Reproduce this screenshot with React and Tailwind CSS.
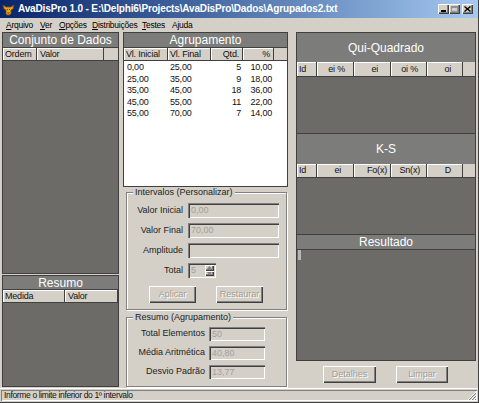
import React from "react";

const raised =
  "shadow-[inset_1px_1px_0_#ffffff,inset_-1px_-1px_0_#404040,inset_-2px_-2px_0_#808080]";
const sunken =
  "shadow-[inset_1px_1px_0_#808080,inset_2px_2px_0_#404040,inset_-1px_-1px_0_#ffffff,inset_-2px_-2px_0_#d4d0c8]";

function HCell({ className = "", children }) {
  return (
    <div
      className={`h-full shrink-0 flex items-center bg-[#d4d0c8] border-r border-b border-[#404040] shadow-[inset_1px_1px_0_#ffffff] text-[9px] leading-none tracking-[-0.2px] text-[#111] ${className}`}
    >
      {children}
    </div>
  );
}

function Filler() {
  return <div className="h-full flex-1 bg-[#d4d0c8] border-b border-[#404040]" />;
}

function PanelHeader({ className = "", children }) {
  return (
    <div
      className={`shrink-0 flex items-center justify-center bg-[#7c7c7a] text-white text-[12px] leading-none border-b border-[#404040] ${className}`}
    >
      {children}
    </div>
  );
}

function DisabledInput({ className = "", value }) {
  return (
    <div
      className={`bg-[#d4d0c8] ${sunken} flex items-center pl-[3px] text-[9px] leading-none text-[#a3a09a] ${className}`}
    >
      {value}
    </div>
  );
}

function DisabledButton({ className = "", children }) {
  return (
    <div
      className={`bg-[#d4d0c8] ${raised} flex items-center justify-center text-[9px] leading-none text-[#a09c94] [text-shadow:1px_1px_0_#ffffff] ${className}`}
    >
      {children}
    </div>
  );
}

function TitleButton({ children, disabled }) {
  return (
    <div
      className={`w-[11px] h-[10px] bg-[#d4d0c8] ${raised} flex items-center justify-center ${
        disabled ? "text-[#909090]" : "text-black"
      }`}
    >
      {children}
    </div>
  );
}

const rows = [
  ["0,00", "25,00", "5", "10,00"],
  ["25,00", "35,00", "9", "18,00"],
  ["35,00", "45,00", "18", "36,00"],
  ["45,00", "55,00", "11", "22,00"],
  ["55,00", "70,00", "7", "14,00"],
];

export default function App() {
  return (
    <div className="w-[479px] h-[403px] bg-[#d4d0c8] flex flex-col overflow-hidden font-['Liberation_Sans',Arial,sans-serif] text-black border-r border-b border-[#404040]">
      {/* Title bar */}
      <div className="h-[18px] shrink-0 flex items-center bg-linear-to-r from-[#0a246a] to-[#a6caf0] pl-[2px] pr-[3px]">
        <svg width="13" height="13" viewBox="0 0 13 13" className="shrink-0">
          <path d="M1 2 L4 4 L9 4 L12 2 L11 6 L9 7 L9 11 L7 12 L5 12 L4 11 L4 7 L2 6 Z" fill="#e8a21c" stroke="#7a4a06" strokeWidth="0.8" />
          <path d="M5 6 L6 7 M8 6 L7 7" stroke="#5a3200" strokeWidth="0.9" />
          <path d="M5.5 10 L7.5 10" stroke="#5a3200" strokeWidth="0.9" />
        </svg>
        <span className="ml-[3px] text-white font-bold text-[10px] leading-none tracking-[-0.15px] whitespace-nowrap">
          {"AvaDisPro 1.0 - E:\\Delphi6\\Projects\\AvaDisPro\\Dados\\Agrupados2.txt"}
        </span>
        <div className="ml-auto flex items-center mr-[2px]">
          <TitleButton>
            <div className="w-[5px] h-[2px] bg-black mt-[4px] -ml-[1px]" />
          </TitleButton>
          <TitleButton disabled>
            <div className="w-[7px] h-[6px] border border-t-2 border-[#909090]" />
          </TitleButton>
          <div className="w-[2px]" />
          <TitleButton>
            <svg width="7" height="6" viewBox="0 0 7 6">
              <path d="M0.5 0.5 L6.5 5.5 M6.5 0.5 L0.5 5.5" stroke="#000" strokeWidth="1.4" />
            </svg>
          </TitleButton>
        </div>
      </div>

      {/* Menu bar */}
      <div className="h-[14px] shrink-0 flex items-center pl-[6px] text-[8.5px] leading-none tracking-[-0.25px] whitespace-nowrap">
        <span className="w-[34px] shrink-0"><u>A</u>rquivo</span>
        <span className="w-[19px] shrink-0"><u>V</u>er</span>
        <span className="w-[33px] shrink-0"><u>O</u>pções</span>
        <span className="w-[50px] shrink-0"><u>D</u>istribuições</span>
        <span className="w-[30px] shrink-0"><u>T</u>estes</span>
        <span>A<u>j</u>uda</span>
      </div>

      {/* Content */}
      <div className="h-[356px] shrink-0 flex">
        {/* Left column */}
        <div className="ml-[2px] w-[117px] flex flex-col">
          <div className="h-[242px] border border-[#404040] flex flex-col">
            <PanelHeader className="h-[15px]">Conjunto de Dados</PanelHeader>
            <div className="h-[13px] shrink-0 flex">
              <HCell className="w-[34px] pl-[2px]">Ordem</HCell>
              <HCell className="w-[67px] pl-[3px]">Valor</HCell>
              <Filler />
            </div>
            <div className="flex-1 bg-[#6c6b67]" />
          </div>
          <div className="mt-[1px] h-[112px] border border-[#404040] flex flex-col">
            <PanelHeader className="h-[14px]">Resumo</PanelHeader>
            <div className="h-[13px] shrink-0 flex">
              <HCell className="w-[62px] pl-[2px]">Medida</HCell>
              <HCell className="flex-1 pl-[3px]">Valor</HCell>
            </div>
            <div className="flex-1 bg-[#6c6b67]" />
          </div>
        </div>

        {/* Middle column */}
        <div className="ml-[4px] w-[165px] flex flex-col">
          <div className="h-[155px] border border-[#404040] flex flex-col">
            <PanelHeader className="h-[15px]">Agrupamento</PanelHeader>
            <div className="h-[13px] shrink-0 flex">
              <HCell className="w-[44px] pl-[2px]">Vl. Inicial</HCell>
              <HCell className="w-[43px] pl-[2px]">Vl. Final</HCell>
              <HCell className="w-[32px] justify-end pr-[3px]">Qtd.</HCell>
              <HCell className="w-[31px] justify-end pr-[3px]">%</HCell>
              <Filler />
            </div>
            <div className="flex-1 bg-white pt-[1px] text-[9px] tracking-[-0.2px] text-[#111]">
              {rows.map((r) => (
                <div key={r[0]} className="h-[11.5px] flex items-center leading-none">
                  <div className="w-[44px] pl-[3px]">{r[0]}</div>
                  <div className="w-[43px] pl-[2px]">{r[1]}</div>
                  <div className="w-[32px] text-right pr-[2px]">{r[2]}</div>
                  <div className="w-[31px] text-right pr-[2px]">{r[3]}</div>
                </div>
              ))}
            </div>
          </div>

          <fieldset className="ml-[3px] w-[161px] h-[123px] border border-[#808080] shadow-[inset_1px_1px_0_#ffffff,1px_1px_0_#ffffff] m-0 p-0">
            <legend className="ml-[6px] px-[2px] text-[9px] leading-[11px] text-[#222] bg-[#d4d0c8]">
              Intervalos (Personalizar)
            </legend>
            <div className="pt-[5px] flex flex-col gap-[5px] text-[9px] text-[#222]">
              <div className="flex items-center h-[15px]">
                <div className="w-[56px] text-right">Valor Inicial</div>
                <DisabledInput className="ml-[5px] w-[91px] h-[15px]" value="0,00" />
              </div>
              <div className="flex items-center h-[15px]">
                <div className="w-[56px] text-right">Valor Final</div>
                <DisabledInput className="ml-[5px] w-[91px] h-[15px]" value="70,00" />
              </div>
              <div className="flex items-center h-[15px]">
                <div className="w-[56px] text-right">Amplitude</div>
                <DisabledInput className="ml-[5px] w-[91px] h-[15px]" value="" />
              </div>
              <div className="flex items-center h-[15px]">
                <div className="w-[56px] text-right">Total</div>
                <div className={`ml-[5px] w-[28px] h-[15px] bg-[#d4d0c8] ${sunken} flex items-stretch p-[2px]`}>
                  <div className="flex-1 flex items-center pl-[1px] text-[9px] leading-none text-[#a3a09a]">5</div>
                  <div className="w-[9px] flex flex-col">
                    <div className={`flex-1 bg-[#d4d0c8] ${raised} flex items-center justify-center`}>
                      <svg width="5" height="3" viewBox="0 0 5 3"><path d="M0 3 L2.5 0 L5 3 Z" fill="#808080" /></svg>
                    </div>
                    <div className={`flex-1 bg-[#d4d0c8] ${raised} flex items-center justify-center`}>
                      <svg width="5" height="3" viewBox="0 0 5 3"><path d="M0 0 L2.5 3 L5 0 Z" fill="#808080" /></svg>
                    </div>
                  </div>
                </div>
              </div>
              <div className="flex mt-[3px]">
                <DisabledButton className="ml-[22px] w-[47px] h-[17px]">Aplicar</DisabledButton>
                <DisabledButton className="ml-[20px] w-[47px] h-[17px]">Restaurar</DisabledButton>
              </div>
            </div>
          </fieldset>

          <fieldset className="mt-[2px] ml-[3px] w-[161px] h-[75px] border border-[#808080] shadow-[inset_1px_1px_0_#ffffff,1px_1px_0_#ffffff] m-0 p-0">
            <legend className="ml-[6px] px-[2px] text-[9px] leading-[11px] text-[#222] bg-[#d4d0c8]">
              Resumo (Agrupamento)
            </legend>
            <div className="pt-[4px] flex flex-col gap-[5px] text-[9px] text-[#222]">
              <div className="flex items-center h-[14px]">
                <div className="w-[78px] text-right">Total Elementos</div>
                <DisabledInput className="ml-[4px] w-[56px] h-[14px]" value="50" />
              </div>
              <div className="flex items-center h-[14px]">
                <div className="w-[78px] text-right">Média Aritmética</div>
                <DisabledInput className="ml-[4px] w-[56px] h-[14px]" value="40,80" />
              </div>
              <div className="flex items-center h-[14px]">
                <div className="w-[78px] text-right">Desvio Padrão</div>
                <DisabledInput className="ml-[4px] w-[56px] h-[14px]" value="13,77" />
              </div>
            </div>
          </fieldset>
        </div>

        {/* Right column */}
        <div className="ml-[8px] w-[180px] flex flex-col">
          <div className="h-[329px] border border-[#404040] flex flex-col">
            <PanelHeader className="h-[29px] border-b-0">Qui-Quadrado</PanelHeader>
            <div className="h-[15px] shrink-0 flex">
              <HCell className="w-[20px] pl-[2px]">Id</HCell>
              <HCell className="w-[37px] justify-end pr-[8px]">ei %</HCell>
              <HCell className="w-[37px] justify-end pr-[12px]">ei</HCell>
              <HCell className="w-[36px] justify-end pr-[8px]">oi %</HCell>
              <HCell className="w-[36px] justify-end pr-[11px]">oi</HCell>
              <Filler />
            </div>
            <div className="h-[57px] shrink-0 bg-[#6c6b67] border-b border-[#404040]" />
            <PanelHeader className="h-[30px] border-b-0">K-S</PanelHeader>
            <div className="h-[14px] shrink-0 flex">
              <HCell className="w-[20px] pl-[2px]">Id</HCell>
              <HCell className="w-[37px] justify-end pr-[12px]">ei</HCell>
              <HCell className="w-[37px] justify-end pr-[3px]">Fo(x)</HCell>
              <HCell className="w-[36px] justify-end pr-[6px]">Sn(x)</HCell>
              <HCell className="w-[36px] justify-end pr-[11px]">D</HCell>
              <Filler />
            </div>
            <div className="h-[57px] shrink-0 bg-[#6c6b67] border-b border-[#404040]" />
            <PanelHeader className="h-[15px]">Resultado</PanelHeader>
            <div className="flex-1 bg-[#6c6b67] pl-[1px]">
              <div className="w-[3px] h-[10px] bg-[#b8b6b0]" />
            </div>
          </div>
          <div className="mt-[5px] flex">
            <DisabledButton className="ml-[27px] w-[53px] h-[17px]">Detalhes</DisabledButton>
            <DisabledButton className="ml-[20px] w-[52px] h-[17px]">Limpar</DisabledButton>
          </div>
        </div>
      </div>

      {/* Status bar */}
      <div className="flex-1 flex items-stretch pt-[1px] pl-[1px] pr-[1px] pb-[1px] border-t border-[#ffffff]">
        <div className="flex-1 shadow-[inset_1px_1px_0_#808080,inset_-1px_-1px_0_#ffffff] flex items-center pl-[3px] text-[8.5px] leading-none tracking-[-0.35px] text-[#111] relative">
          Informe o limite inferior do 1º intervalo
          <svg width="11" height="11" viewBox="0 0 11 11" className="absolute right-0 bottom-0">
            <path d="M10 2 L2 10 M10 5 L5 10 M10 8 L8 10" stroke="#ffffff" strokeWidth="1" />
            <path d="M10 3 L3 10 M10 6 L6 10 M10 9 L9 10" stroke="#808080" strokeWidth="1" />
          </svg>
        </div>
      </div>
    </div>
  );
}
